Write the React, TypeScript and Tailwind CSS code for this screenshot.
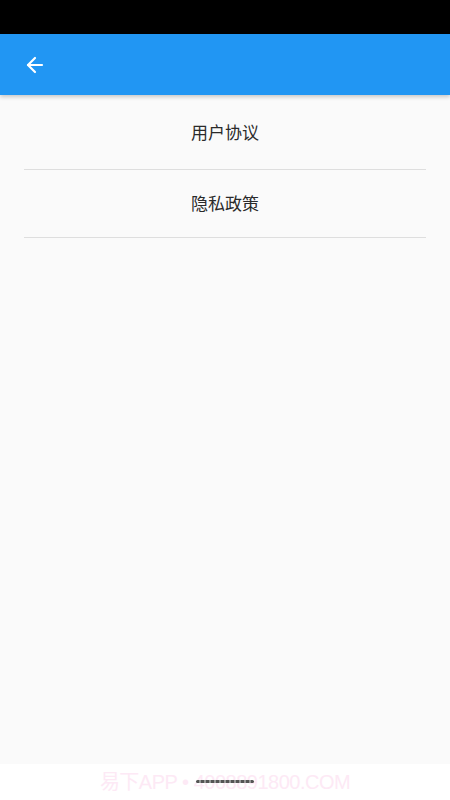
import { ArrowLeft } from "lucide-react";

const ITEMS = ["用户协议", "隐私政策"];

export default function App() {
  return (
    <div className="w-[450px] h-[800px] flex flex-col bg-white overflow-hidden" style={{ fontFamily: '"Noto Sans", "Noto Sans CJK SC", sans-serif' }}>
      {/* status bar */}
      <div className="h-[34px] bg-black shrink-0" />
      {/* app bar */}
      <div className="h-[61px] bg-[#2196f3] shrink-0 flex items-center px-[23px] shadow-[0_2px_4px_rgba(0,0,0,0.2)] relative z-10">
        <ArrowLeft className="w-[24px] h-[24px] text-white" strokeWidth={2.2} />
      </div>
      {/* body */}
      <div className="flex-1 bg-[#fafafa] px-[24px]">
        <div className="h-[75px] flex items-center justify-center border-b border-[#dedede] pt-[2px]">
          <span className="text-[17px] text-[#2a2a2a]">{ITEMS[0]}</span>
        </div>
        <div className="h-[68px] flex items-center justify-center border-b border-[#dedede]">
          <span className="text-[17px] text-[#2a2a2a]">{ITEMS[1]}</span>
        </div>
      </div>
      {/* bottom strip */}
      <div className="h-[36px] shrink-0 bg-white relative flex items-center justify-center">
        <span className="text-[20px] text-[#fde9f5] tracking-tight" style={{ fontFamily: '"Liberation Sans", "Noto Sans CJK SC", sans-serif' }}>易下APP • 4008891800.COM</span>
        <div className="absolute left-[196px] top-[16px] w-[58px] h-[3px] bg-[repeating-linear-gradient(90deg,#555_0_3px,#999_3px_5px)] rounded-sm" />
      </div>
    </div>
  );
}
